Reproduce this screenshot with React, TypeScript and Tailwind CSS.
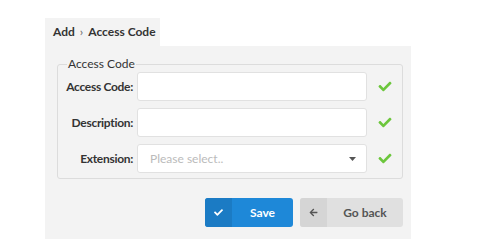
import { FaCheck, FaArrowLeft } from "react-icons/fa";

const rows = [
  { label: "Access Code:", kind: "text" },
  { label: "Description:", kind: "text" },
  { label: "Extension:", kind: "select" },
];

export default function App() {
  return (
    <div className="h-[248px] w-[500px] bg-white pl-[45px] pt-[18px] font-['Lato',sans-serif] text-[#333]">
      {/* Tab */}
      <div className="flex h-[28px] w-[115px] items-center gap-[5px] bg-[#f3f3f3] pl-[8px] text-[12px] font-bold">
        <span>Add</span>
        <span className="text-[12px] font-normal text-[#666]">›</span>
        <span>Access Code</span>
      </div>

      {/* Panel */}
      <div className="w-[366px] bg-[#f3f3f3] pb-[12px] pl-[12px] pr-[8px] pt-[11px]">
        <fieldset className="rounded-[3px] border border-[#dcdcdc] pb-[5px] pl-[9px] pr-[10px] pt-[1px]">
          <legend className="px-[1px] text-[12px] leading-[14px] text-[#333]">Access Code</legend>
          <div className="flex flex-col gap-[7px]">
            {rows.map((r) => (
              <div key={r.label} className="flex items-center">
                <div className="flex w-[66px] flex-none justify-end whitespace-nowrap text-[12px] font-bold tracking-[-0.3px]">
                  {r.label}
                </div>
                <div className="ml-[4px] flex h-[29px] w-[230px] flex-none items-center justify-between rounded-[3px] border border-[#e1e1e1] bg-white pl-[12px] pr-[10px] text-[12px]">
                  {r.kind === "select" && (
                    <>
                      <span className="text-[#bbb]">Please select..</span>
                      <svg width="7" height="4" viewBox="0 0 7 4">
                        <path d="M0 0h7L3.5 4z" fill="#555" />
                      </svg>
                    </>
                  )}
                </div>
                <FaCheck className="ml-[11px] h-[13px] w-[14px] flex-none text-[#6cc63c]" />
              </div>
            ))}
          </div>
        </fieldset>

        {/* Buttons */}
        <div className="mt-[19px] flex justify-end gap-[7px]">
          <button className="flex h-[29px] w-[88px] overflow-hidden rounded-[3px] bg-[#1e88d8] text-[12px] font-bold text-white">
            <span className="flex h-full w-[27px] items-center justify-center bg-[#1b7bc4]">
              <FaCheck className="h-[9px] w-[9px]" />
            </span>
            <span className="flex flex-1 items-center justify-center">Save</span>
          </button>
          <button className="flex h-[29px] w-[103px] overflow-hidden rounded-[3px] bg-[#e0e0e0] text-[12px] font-bold text-[#555]">
            <span className="flex h-full w-[27px] items-center justify-center bg-[#d5d5d5]">
              <FaArrowLeft className="h-[9px] w-[9px]" />
            </span>
            <span className="flex flex-1 items-center justify-center">Go back</span>
          </button>
        </div>
      </div>
    </div>
  );
}
